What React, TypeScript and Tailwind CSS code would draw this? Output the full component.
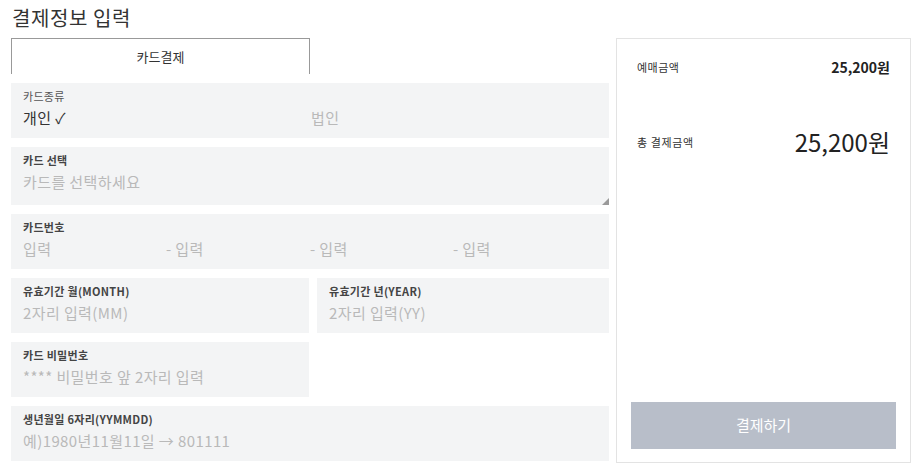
import React from 'react';

function Field({ label, children, className = '', strong = true }: { label: string; children: React.ReactNode; className?: string; strong?: boolean }) {
  return (
    <div className={`relative bg-[#f3f4f5] px-3 pt-[5px] h-[55px] ${className}`}>
      <div className={`text-[11px] leading-[16px] tracking-[0.3px] ${strong ? 'font-bold text-[#444]' : 'text-[#555]'}`}>{label}</div>
      <div className="mt-[4px] text-[15px] leading-[20px] tracking-[0.4px] text-[#b9b9b9]">{children}</div>
    </div>
  );
}

export default function App() {
  return (
    <div className="w-[914px] h-[467px] bg-white overflow-hidden font-['Noto_Sans_CJK_KR','Noto_Sans',sans-serif] text-[#333]">
      <h1 className="pl-[12px] pt-[4px] text-[20px] leading-[27px] tracking-[0.6px] text-[#333]">결제정보 입력</h1>
      <div className="flex gap-[7px] pl-[11px] pt-[7px]">
        <div className="w-[598px] flex flex-col">
          <div className="w-[299px] h-[36px] border border-b-0 border-[#999] flex items-center justify-center text-[13px] text-[#333]">
            카드결제
          </div>
          <div className="mt-[9px] flex flex-col gap-[9px]">
            <Field label="카드종류" strong={false}>
              <div className="flex">
                <span className="w-[288px] text-[#333]">개인 ✓</span>
                <span>법인</span>
              </div>
            </Field>
            <Field label="카드 선택" className="h-[58px]">
              카드를 선택하세요
              <svg className="absolute right-0 bottom-0" width="7" height="7" viewBox="0 0 7 7">
                <path d="M7 0 L7 7 L0 7 Z" fill="#9a9a9a" />
              </svg>
            </Field>
            <Field label="카드번호">
              <div className="flex">
                <span className="w-[143px]">입력</span>
                <span className="w-[144px]">- 입력</span>
                <span className="w-[143px]">- 입력</span>
                <span>- 입력</span>
              </div>
            </Field>
            <div className="flex gap-[8px] h-[55px]">
              <Field label="유효기간 월(MONTH)" className="w-[298px]">2자리 입력(MM)</Field>
              <Field label="유효기간 년(YEAR)" className="flex-1">2자리 입력(YY)</Field>
            </div>
            <Field label="카드 비밀번호" className="w-[298px]">**** 비밀번호 앞 2자리 입력</Field>
            <Field label="생년월일 6자리(YYMMDD)">예)1980년11월11일 → 801111</Field>
          </div>
        </div>
        <div className="w-[295px] h-[425px] border border-[#e3e3e3] flex flex-col px-[14px] pb-[13px]">
          <div className="flex items-center justify-between pt-[18px] pl-[6px] pr-[6px]">
            <span className="text-[11px] tracking-[0.5px] text-[#333]">예매금액</span>
            <span className="text-[14px] font-bold text-[#222]">25,200원</span>
          </div>
          <div className="flex items-center justify-between mt-[46px] pl-[6px] pr-[6px]">
            <span className="text-[11px] tracking-[0.6px] text-[#333]">총 결제금액</span>
            <span className="text-[24px] text-[#222]">25,200원</span>
          </div>
          <div className="flex-1" />
          <button className="h-[47px] w-full bg-[#b8bec9] text-white text-[15px]">결제하기</button>
        </div>
      </div>
    </div>
  );
}
